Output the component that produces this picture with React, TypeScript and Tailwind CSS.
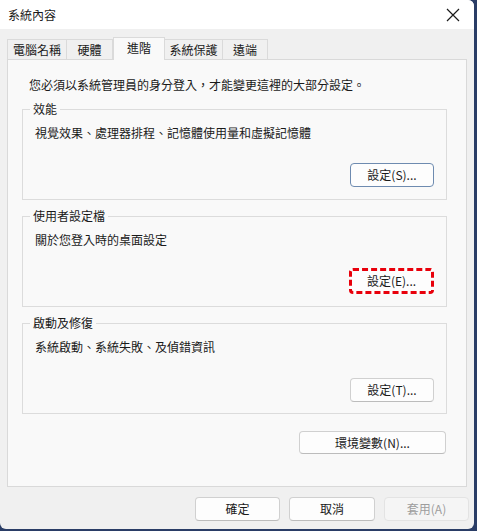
import React from "react";

const font = { fontFamily: '"Noto Sans CJK TC", "Noto Sans", sans-serif' };

type BtnProps = {
  label: string;
  className?: string;
  primary?: boolean;
  disabled?: boolean;
};

function Button({ label, className = "", primary, disabled }: BtnProps) {
  return (
    <div
      className={`flex items-center justify-center rounded-[4px] border text-[12px] leading-none ${
        primary
          ? "border-[#6e8bb0] bg-[#fdfdfd] text-[#1a1a1a]"
          : disabled
          ? "border-[#e3e3e3] bg-[#f5f5f5] text-[#9d9d9d]"
          : "border-[#d0d0d0] border-b-[#bcbcbc] bg-[#fdfdfd] text-[#1a1a1a]"
      } ${className}`}
    >
      {label}
    </div>
  );
}

type GroupProps = {
  title: string;
  desc: string;
  button: React.ReactNode;
  gap?: string;
};

function Group({ title, desc, button, gap = "mt-[22px]" }: GroupProps) {
  return (
    <div className="relative h-[91px] border border-[#dcdcdc]">
      <span className="absolute -top-[9px] left-[7px] bg-[#f9f9f9] px-[3px] text-[12px] leading-[16px] text-[#1a1a1a]">
        {title}
      </span>
      <div className="flex h-full flex-col px-[12px] pt-[15px]">
        <p className="text-[12px] leading-[16px] text-[#1a1a1a]">{desc}</p>
        <div className={`${gap} flex justify-end`}>{button}</div>
      </div>
    </div>
  );
}

export default function App() {
  const tabs = ["電腦名稱", "硬體", "進階", "系統保護", "遠端"];
  const widths = ["w-[60px]", "w-[47px]", "w-[52px]", "w-[59px]", "w-[46px]"];

  return (
    <div className="flex h-[531px] w-[477px] bg-[#2a3d66]" style={font}>
      <div className="flex h-[529px] w-[474px] flex-col overflow-hidden rounded-b-[6px] rounded-tr-[6px] bg-[#f0f0f0]">
        {/* Title bar */}
        <div className="flex h-[29px] items-center justify-between bg-white pl-[8px] pr-[14px]">
          <span className="text-[12px] text-[#1a1a1a]">系統內容</span>
          <svg width="14" height="14" viewBox="0 0 14 14">
            <path d="M1 1 L13 13 M13 1 L1 13" stroke="#1a1a1a" strokeWidth="1.2" />
          </svg>
        </div>

        <div className="flex flex-1 flex-col px-[7px]">
          {/* Tabs */}
          <div className="mt-[8px] flex h-[22px] items-end">
            {tabs.map((t, i) => {
              const active = i === 2;
              return (
                <div
                  key={t}
                  className={`flex items-center justify-center border border-[#dadada] text-[12px] text-[#1a1a1a] ${widths[i]} ${
                    active
                      ? "relative z-10 -mb-px h-[23px] border-b-0 bg-[#f9f9f9] pb-[3px]"
                      : "h-[20px] border-b-0 bg-[#f0f0f0] -ml-px first:ml-0"
                  }`}
                >
                  {t}
                </div>
              );
            })}
          </div>

          {/* Panel */}
          <div className="flex h-[428px] flex-col border border-[#d9d9d9] bg-[#f9f9f9] px-[14px] pt-[17px]">
            <p className="pl-[7px] text-[12px] leading-[16px] text-[#1a1a1a]">
              您必須以系統管理員的身分登入，才能變更這裡的大部分設定。
            </p>
            <div className="mr-[5px] mt-[16px] flex flex-col gap-[16px]">
              <Group
                title="效能"
                desc="視覺效果、處理器排程、記憶體使用量和虛擬記憶體"
                button={<Button label="設定(S)..." primary className="h-[24px] w-[84px]" />}
              />
              <Group
                title="使用者設定檔"
                desc="關於您登入時的桌面設定"
                gap="mt-[20px]"
                button={
                  <div className="flex h-[26px] w-[85px] items-center justify-center rounded-[4px] border-[3px] border-dashed border-[#e8000b] bg-[#fdfdfd] text-[12px] leading-none text-[#1a1a1a]">
                    設定(E)...
                  </div>
                }
              />
              <Group
                title="啟動及修復"
                desc="系統啟動、系統失敗、及偵錯資訊"
                gap="mt-[23px]"
                button={<Button label="設定(T)..." className="h-[24px] w-[84px]" />}
              />
            </div>
            <div className="mr-[6px] mt-[17px] flex justify-end">
              <Button label="環境變數(N)..." className="h-[23px] w-[147px]" />
            </div>
          </div>

          {/* Footer buttons */}
          <div className="mt-[10px] flex justify-end gap-[9px]">
            <Button label="確定" className="h-[24px] w-[85px]" />
            <Button label="取消" className="h-[24px] w-[86px]" />
            <Button label="套用(A)" disabled className="-mr-[2px] h-[24px] w-[85px]" />
          </div>
        </div>
      </div>
    </div>
  );
}
